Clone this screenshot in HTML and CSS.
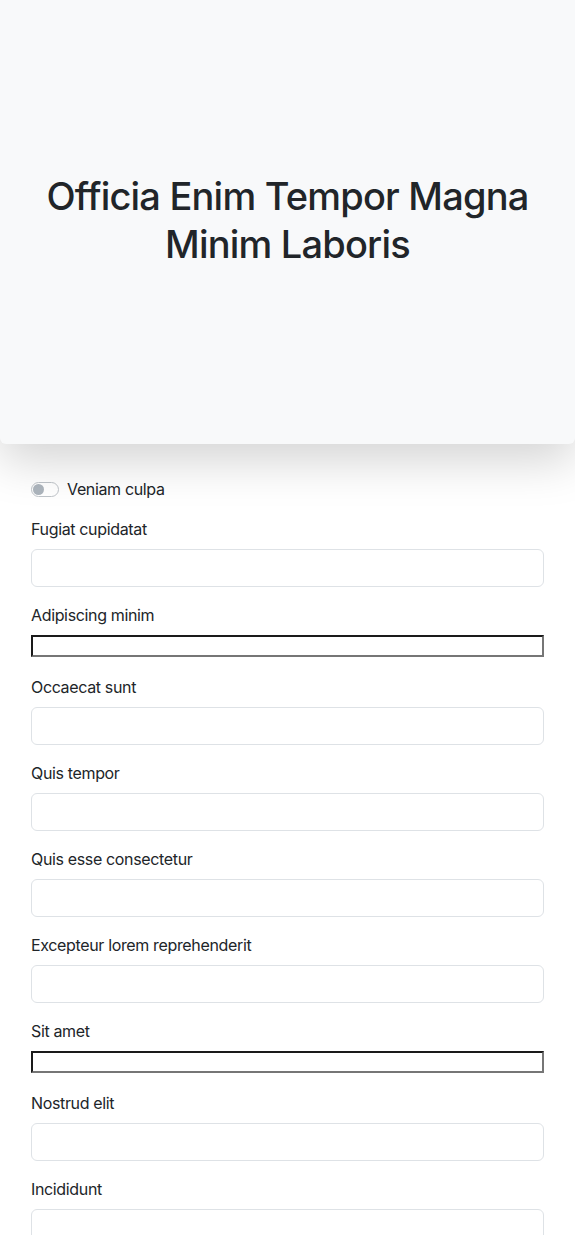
FILE: index.html
```html
<!DOCTYPE html>
<html lang="en">
<head>
<meta charset="utf-8">
<title>Form</title>
<link rel="stylesheet" href="styles.css">
</head>
<body>
<header class="hero">
  <h1 class="hero-title">Officia Enim Tempor Magna Minim Laboris</h1>
</header>
<main class="form">
  <div class="row switch-row">
    <span class="switch"><span class="knob"></span></span>
    <label class="switch-label">Veniam culpa</label>
  </div>
  <div class="row">
    <label class="label">Fugiat cupidatat</label>
    <input class="control" type="text">
  </div>
  <div class="row plain-row">
    <label class="label">Adipiscing minim</label>
    <div class="plain-line"><input class="plain" type="text"></div>
  </div>
  <div class="row">
    <label class="label">Occaecat sunt</label>
    <input class="control" type="text">
  </div>
  <div class="row">
    <label class="label">Quis tempor</label>
    <input class="control" type="text">
  </div>
  <div class="row">
    <label class="label">Quis esse consectetur</label>
    <input class="control" type="text">
  </div>
  <div class="row">
    <label class="label">Excepteur lorem reprehenderit</label>
    <input class="control" type="text">
  </div>
  <div class="row plain-row">
    <label class="label">Sit amet</label>
    <div class="plain-line"><input class="plain" type="text"></div>
  </div>
  <div class="row">
    <label class="label">Nostrud elit</label>
    <input class="control" type="text">
  </div>
  <div class="row">
    <label class="label">Incididunt</label>
    <input class="control" type="text">
  </div>
</main>
</body>
</html>
```

FILE: styles.css
```css
* { box-sizing: border-box; }
html, body {
  margin: 0;
  padding: 0;
  background: #fff;
}
body {
  font-family: Inter, "Noto Sans", "Liberation Sans", sans-serif;
  font-size: 16px;
  line-height: 1.5;
  color: #212529;
  letter-spacing: -0.35px;
}
.hero {
  height: 444px;
  background: #f8f9fa;
  border-radius: 0 0 6px 6px;
  box-shadow: 0 16px 48px rgba(0, 0, 0, 0.175);
  display: flex;
  align-items: center;
  justify-content: center;
  padding: 0 40px 4px;
  position: relative;
  z-index: 1;
}
.hero-title {
  margin: 0;
  font-size: 38px;
  font-weight: 500;
  line-height: 48px;
  text-align: center;
  letter-spacing: -0.8px;
}
.form {
  padding: 33px 31px 0;
  display: flex;
  flex-direction: column;
}
.row {
  margin-bottom: 16px;
  display: flex;
  flex-direction: column;
}
.switch-row {
  flex-direction: row;
  align-items: center;
  gap: 8px;
  height: 24px;
}
.switch {
  width: 28px;
  height: 15px;
  border: 1px solid #bfc4c9;
  border-radius: 8px;
  background: #fff;
  display: flex;
  align-items: center;
  padding: 1px;
}
.knob {
  width: 11px;
  height: 11px;
  border-radius: 50%;
  background: #adb5bd;
}
.label {
  display: block;
  margin-bottom: 8px;
  line-height: 24px;
}
.control {
  display: block;
  width: 100%;
  height: 38px;
  padding: 6px 12px;
  font: inherit;
  border: 1px solid #dee2e6;
  border-radius: 6px;
  background: #fff;
}
.plain-line {
  line-height: 24px;
  height: 24px;
}
.plain {
  width: 100%;
  height: 22px;
  border: 2px solid #767676;
  border-top-color: #1a1a1a;
  border-left-color: #1a1a1a;
  padding: 1px 2px;
  background: #fff;
  vertical-align: top;
}
```
